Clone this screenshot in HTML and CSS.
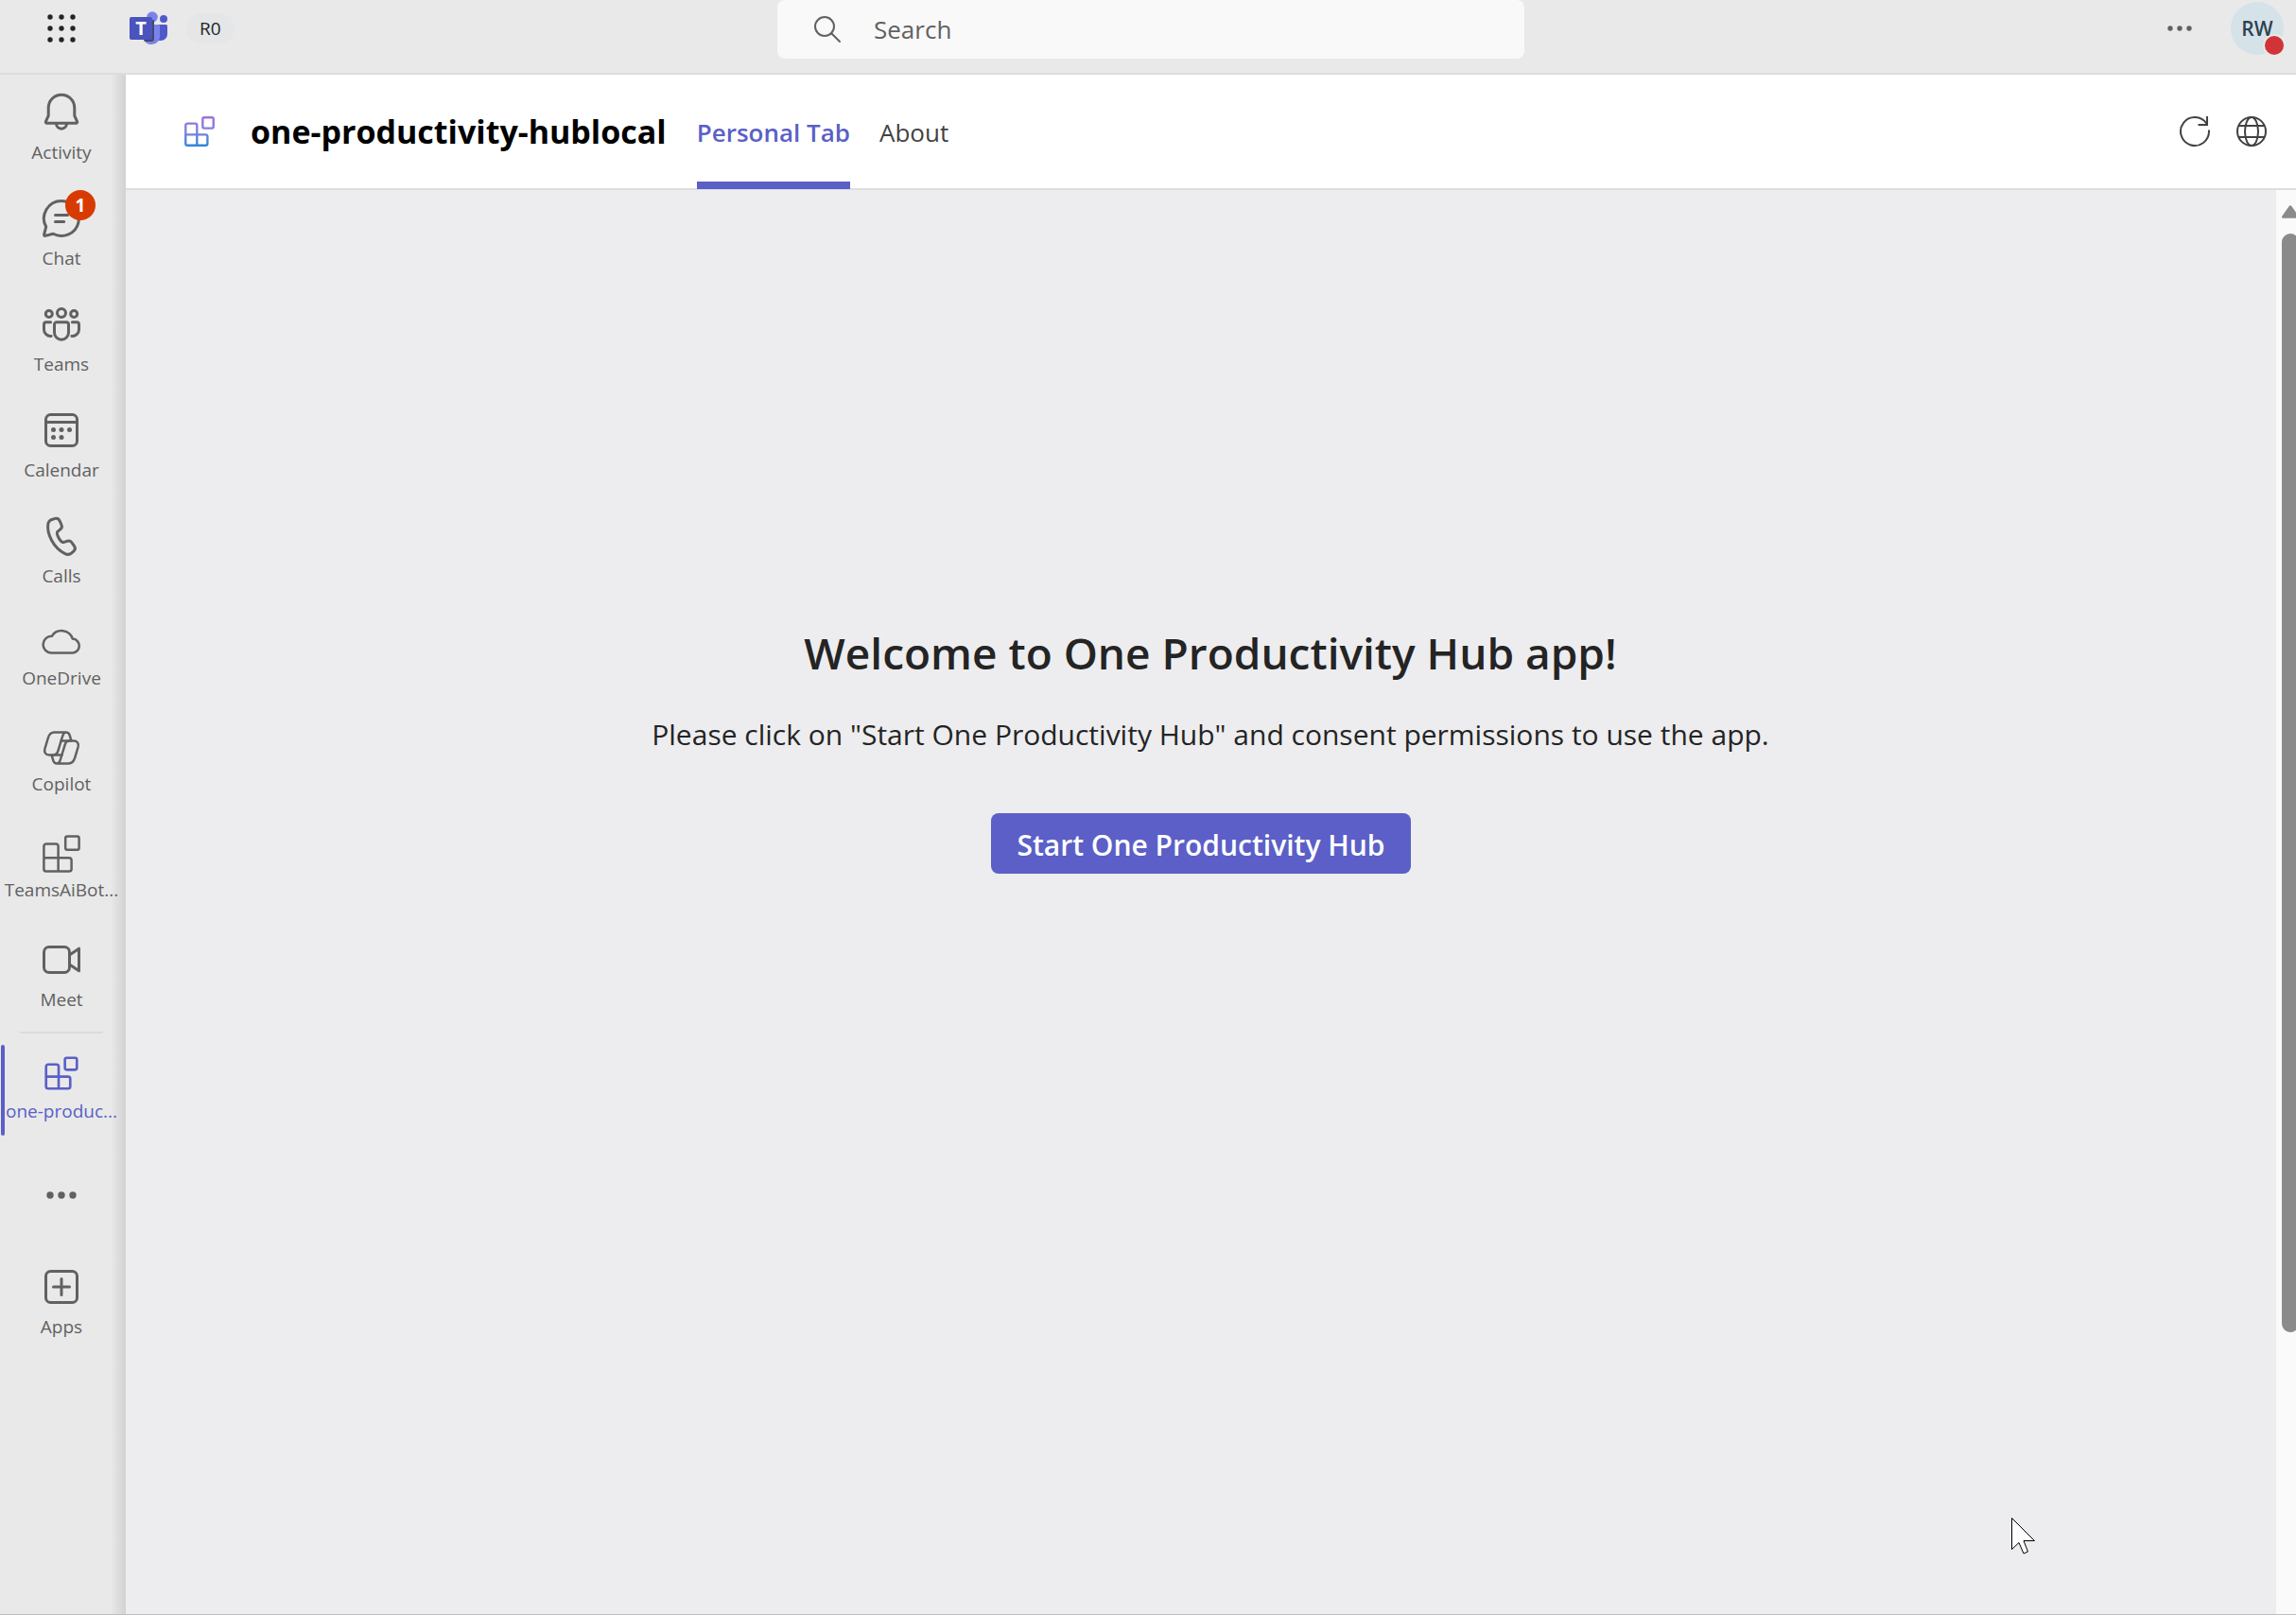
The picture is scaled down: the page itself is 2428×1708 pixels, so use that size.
FILE: index.html
```html
<!DOCTYPE html>
<html lang="en">
<head>
  <meta charset="utf-8">
  <meta name="viewport" content="width=device-width, initial-scale=1">
  <title>one-productivity-hublocal</title>
  <link rel="stylesheet" href="styles.css">
</head>
<body>
  <svg class="defs" width="0" height="0" aria-hidden="true">
    <defs>
      <linearGradient id="blocks-gradient" gradientUnits="userSpaceOnUse" x1="0" y1="2" x2="0" y2="22">
        <stop offset="0" stop-color="#a070d8"></stop>
        <stop offset="0.5" stop-color="#8080dc"></stop>
        <stop offset="1" stop-color="#2f86d6"></stop>
      </linearGradient>
      <symbol id="blocks" viewBox="0 0 24 24">
        <path d="M2.7 8a1.3 1.3 0 0 1 1.300-1.300h5a1.300 1.300 0 0 1 1.300 1.300v6.100h5.700a1.300 1.300 0 0 1 1.300 1.300V20a1.300 1.300 0 0 1-1.300 1.300H4A1.300 1.300 0 0 1 2.700 20zM2.700 14.100h7.600v7.200"></path>
        <rect x="14.1" y="2.700" width="7.200" height="7.200" rx="1"></rect>
      </symbol>
    </defs>
  </svg>

  <header class="topbar">
    <div class="topbar-start">
      <button class="icon-button waffle" aria-label="App launcher">
        <svg width="32" height="32" viewBox="0 0 32 32" fill="#242424">
          <circle cx="4" cy="4" r="2.700"></circle><circle cx="16" cy="4" r="2.700"></circle><circle cx="28" cy="4" r="2.700"></circle>
          <circle cx="4" cy="16" r="2.700"></circle><circle cx="16" cy="16" r="2.700"></circle><circle cx="28" cy="16" r="2.700"></circle>
          <circle cx="4" cy="28" r="2.700"></circle><circle cx="16" cy="28" r="2.700"></circle><circle cx="28" cy="28" r="2.700"></circle>
        </svg>
      </button>
      <svg class="logo" width="40" height="36" viewBox="0 0 40 36" role="img" aria-label="Microsoft Teams">
        <circle cx="36" cy="8" r="4" fill="#5059c9"></circle>
        <path d="M28 14h10.500a1.500 1.500 0 0 1 1.500 1.500V24a7 7 0 0 1-7 7h-5z" fill="#5059c9"></path>
        <circle cx="24" cy="6" r="5.800" fill="#7b83eb"></circle>
        <path d="M15 14h15.500a1.500 1.500 0 0 1 1.500 1.500V27a9 9 0 0 1-17 3z" fill="#7b83eb"></path>
        <path d="M20 9h5a1 1 0 0 1 1 1v19a3 3 0 0 1-3 3h-7l-2-4z" fill="#42496f"></path>
        <rect x="0" y="6" width="24" height="24" rx="2" fill="#4b53bc"></rect>
        <text class="logo-letter" x="12" y="25" text-anchor="middle">T</text>
      </svg>
      <span class="pill">R0</span>
    </div>

    <label class="search">
      <svg width="30" height="30" viewBox="0 0 30 30" fill="none" stroke="#616161" stroke-width="2" stroke-linecap="round">
        <circle cx="12" cy="12" r="10"></circle><path d="M19.500 19.500l8.500 8.500"></path>
      </svg>
      <input type="search" placeholder="Search" aria-label="Search">
    </label>

    <div class="topbar-end">
      <button class="icon-button" aria-label="Settings and more">
        <svg width="28" height="8" viewBox="0 0 28 8" fill="#616161">
          <circle cx="4" cy="4" r="2.700"></circle><circle cx="14" cy="4" r="2.700"></circle><circle cx="24" cy="4" r="2.700"></circle>
        </svg>
      </button>
      <button class="avatar" aria-label="Account RW, busy">RW<span class="presence"></span></button>
    </div>
  </header>

  <div class="shell">
    <nav class="rail" aria-label="Apps">
      <a class="rail-item" href="#activity">
        <span class="rail-icon"><svg viewBox="0 0 24 24"><path d="M12 2.600a6.900 6.900 0 0 0-6.900 6.900v4.200L3.700 16.800a.6.6 0 0 0 .55.850h15.500a.6.6 0 0 0 .55-.850l-1.400-3.100V9.500A6.900 6.900 0 0 0 12 2.600zM9.200 17.800a2.800 2.800 0 0 0 5.600 0"></path></svg></span>
        <span class="rail-label">Activity</span>
      </a>
      <a class="rail-item" href="#chat">
        <span class="rail-icon"><svg viewBox="0 0 24 24"><path d="M12 2.750a9.250 9.250 0 1 1-4.400 17.400L3.400 21.200a.5.5 0 0 1-.6-.6l1.050-4.200A9.250 9.250 0 0 1 12 2.750zM8.750 10.200h6.500M8.750 13.700h4.600"></path></svg><span class="badge">1</span></span>
        <span class="rail-label">Chat</span>
      </a>
      <a class="rail-item" href="#teams">
        <span class="rail-icon"><svg viewBox="0 0 24 24"><circle cx="12" cy="6" r="2.250"></circle><circle cx="5.400" cy="6.500" r="1.750"></circle><circle cx="18.600" cy="6.500" r="1.750"></circle><path d="M9.400 10.900h5.200a1.150 1.150 0 0 1 1.150 1.150v4.300a3.750 3.750 0 0 1-7.500 0v-4.300A1.150 1.150 0 0 1 9.400 10.900zM6.300 10.900H3.900a1.150 1.150 0 0 0-1.150 1.150v2.800a3.500 3.500 0 0 0 3.800 3.400M17.700 10.900h2.400a1.150 1.150 0 0 1 1.150 1.150v2.800a3.500 3.500 0 0 1-3.800 3.400"></path></svg></span>
        <span class="rail-label">Teams</span>
      </a>
      <a class="rail-item" href="#calendar">
        <span class="rail-icon"><svg viewBox="0 0 24 24"><rect x="3.750" y="3.750" width="16.500" height="16.500" rx="2.500"></rect><path d="M3.750 7.750h16.500"></path><g class="dots"><circle cx="7.750" cy="11.750" r="1.250"></circle><circle cx="12" cy="11.750" r="1.250"></circle><circle cx="16.250" cy="11.750" r="1.250"></circle><circle cx="7.750" cy="15.750" r="1.250"></circle><circle cx="12" cy="15.750" r="1.250"></circle></g></svg></span>
        <span class="rail-label">Calendar</span>
      </a>
      <a class="rail-item" href="#calls">
        <span class="rail-icon"><svg viewBox="0 0 24 24"><path d="M7.300 3.100l1.300-.4a2 2 0 0 1 2.400 1.100l1 2.200a2 2 0 0 1-.5 2.300L9.900 9.700c-.7.700.5 3.600 1.900 5 .6.600 1 .7 1.500.5l1.900-.6a2 2 0 0 1 2.200.7l1.400 2a2 2 0 0 1-.3 2.600l-1 .9c-1 .9-2.400 1.100-3.600.5C7.500 18 4.200 10.600 4.900 5.600c.2-1.200 1.100-2.200 2.400-2.500z"></path></svg></span>
        <span class="rail-label">Calls</span>
      </a>
      <a class="rail-item compact" href="#onedrive">
        <span class="rail-icon"><svg viewBox="0 0 24 24"><path d="M6.500 17.700h11a3.700 3.700 0 0 0 .4-7.400A6.100 6.100 0 0 0 6.900 8.900a4.400 4.400 0 0 0-.4 8.800z"></path></svg></span>
        <span class="rail-label">OneDrive</span>
      </a>
      <a class="rail-item compact" href="#copilot">
        <span class="rail-icon"><svg viewBox="0 0 24 24">
          <path d="M14 3.800c-.9.300-1.200 1.200-1.500 2.200l-2.300 7.600c-.4 1.400-1.200 2.100-2.500 2.100H5.600c-2 0-2.900-1.300-2.400-3.200l1.700-5.700C5.500 4.800 6.500 3.800 8.200 3.800h6.200c1 0 1.600.5 1.900 1.400l.9 3"></path>
          <path transform="rotate(180 12 12)" d="M14 3.800c-.9.300-1.200 1.200-1.500 2.200l-2.300 7.600c-.4 1.400-1.200 2.100-2.500 2.100H5.600c-2 0-2.900-1.300-2.400-3.200l1.700-5.700C5.500 4.800 6.500 3.800 8.200 3.800h6.200c1 0 1.600.5 1.900 1.400l.9 3"></path>
          <path d="M16.300 8.300h-4.500M7.700 15.700h4.500"></path></svg></span>
        <span class="rail-label">Copilot</span>
      </a>
      <a class="rail-item compact" href="#teamsaibot">
        <span class="rail-icon"><svg viewBox="0 0 24 24"><use href="#blocks"></use></svg></span>
        <span class="rail-label">TeamsAiBot...</span>
      </a>
      <a class="rail-item" href="#meet">
        <span class="rail-icon"><svg viewBox="0 0 24 24"><rect x="2.750" y="5.250" width="13.500" height="13.500" rx="2.750"></rect><path d="M16.250 9.500l5-3.400v11.800l-5-3.400"></path></svg></span>
        <span class="rail-label">Meet</span>
      </a>
      <hr class="rail-divider">
      <a class="rail-item active" href="#hub" aria-current="page">
        <span class="rail-icon"><svg viewBox="0 0 24 24"><use href="#blocks"></use></svg></span>
        <span class="rail-label">one-produc...</span>
      </a>
      <button class="rail-item rail-more" aria-label="View more apps">
        <svg width="32" height="8" viewBox="0 0 32 8"><circle cx="4" cy="4" r="3.700"></circle><circle cx="16" cy="4" r="3.700"></circle><circle cx="28" cy="4" r="3.700"></circle></svg>
      </button>
      <a class="rail-item" href="#apps">
        <span class="rail-icon"><svg viewBox="0 0 24 24"><rect x="3.750" y="3.750" width="16.500" height="16.500" rx="2.500"></rect><path d="M12 7.750v8.500M7.750 12h8.500"></path></svg></span>
        <span class="rail-label">Apps</span>
      </a>
    </nav>

    <main class="main">
      <header class="app-header">
        <svg class="app-icon" viewBox="0 0 24 24"><use href="#blocks"></use></svg>
        <h1 class="app-title">one-productivity-hublocal</h1>
        <nav class="tabs" aria-label="Tabs">
          <a class="tab selected" href="#personal" aria-current="page">Personal Tab</a>
          <a class="tab" href="#about">About</a>
        </nav>
        <div class="app-actions">
          <button class="icon-button" aria-label="Reload tab">
            <svg width="34" height="34" viewBox="0 0 34 34" fill="none" stroke="#424242" stroke-width="2"><path d="M32 15.500V17A15 15 0 1 1 29.500 8.700M30 1v9h-9.500"></path></svg>
          </button>
          <button class="icon-button" aria-label="Open in browser">
            <svg width="34" height="34" viewBox="0 0 34 34" fill="none" stroke="#424242" stroke-width="2"><circle cx="17" cy="17" r="15"></circle><ellipse cx="17" cy="17" rx="7" ry="15"></ellipse><path d="M3 11h28M3 23h28"></path></svg>
          </button>
        </div>
      </header>

      <div class="viewport">
        <section class="welcome">
          <h2 class="welcome-title">Welcome to One Productivity Hub app!</h2>
          <p class="welcome-text">Please click on "Start One Productivity Hub" and consent permissions to use the app.</p>
          <button class="primary">Start One Productivity Hub</button>
        </section>
        <div class="scrollbar" aria-hidden="true">
          <svg width="18" height="14" viewBox="0 0 18 14"><path d="M7.500 1.200a2 2 0 0 1 3 0l7 10a1.500 1.500 0 0 1-1.200 2.600H1.700A1.500 1.500 0 0 1 .5 11.200z" fill="#8b8b8b"></path></svg>
          <div class="thumb"></div>
        </div>
        <svg class="cursor" width="28" height="40" viewBox="0 0 28 40" aria-hidden="true"><path d="M.5.5v33l7.500-7 5 11.500 4.500-2-4.500-11.500h11.500z" fill="#fff" stroke="#000"></path></svg>
      </div>
    </main>
  </div>
</body>
</html>
```

FILE: styles.css
```css
* {
  box-sizing: border-box;
}

body {
  margin: 0;
  min-height: 100vh;
  display: flex;
  flex-direction: column;
  background: #e9e9e9;
  border-bottom: 1px solid #bdbdbd;
  color: #242424;
  font-family: "Open Sans", "Noto Sans", sans-serif;
}

button {
  margin: 0;
  padding: 0;
  border: 0;
  background: none;
  color: inherit;
  font: inherit;
}

a {
  color: inherit;
  text-decoration: none;
}

svg {
  display: block;
  flex: none;
}

.defs {
  position: absolute;
}

.icon-button {
  display: flex;
  align-items: center;
  justify-content: center;
}

/* Top bar */

.topbar {
  display: grid;
  grid-template-columns: 1fr minmax(0, 790px) 1fr;
  min-height: 79px;
  padding-left: 6px;
  border-bottom: 2px solid #dcdcdc;
}

.topbar-start,
.topbar-end {
  display: flex;
  align-items: center;
  height: 60px;
}

.waffle {
  width: 118px;
}

.logo {
  margin-left: 13px;
}

.logo-letter {
  fill: #fff;
  font-size: 20px;
  font-weight: 700;
}

.pill {
  margin-left: 20px;
  padding: 0 14px;
  border-radius: 16px;
  background: #e4e6e8;
  font-size: 19px;
  line-height: 32px;
}

.search {
  display: flex;
  align-items: center;
  gap: 34px;
  height: 62px;
  padding: 0 38px;
  border-radius: 8px;
  background: #f9f9f9;
}

.search input {
  flex: 1;
  min-width: 0;
  padding: 0;
  border: 0;
  outline: 0;
  background: none;
  color: #242424;
  font: inherit;
  font-size: 26px;
}

.search input::placeholder {
  color: #616161;
  opacity: 1;
}

.topbar-end {
  justify-content: flex-end;
  gap: 40px;
  padding-right: 13px;
}

.avatar {
  position: relative;
  width: 56px;
  height: 56px;
  border-radius: 50%;
  background: #d5e2e8;
  color: #2c4250;
  font-size: 21px;
  font-weight: 600;
}

.presence {
  position: absolute;
  right: -2px;
  bottom: -2px;
  width: 24px;
  height: 24px;
  border: 2px solid #e9e9e9;
  border-radius: 50%;
  background: #d13438;
}

/* Shell */

.shell {
  display: flex;
  flex: 1;
}

.rail {
  display: flex;
  flex-direction: column;
  flex: none;
  width: 133px;
  background: linear-gradient(to left, #d2d2d2, #e9e9e9 16px);
  color: #616161;
}

.rail-item {
  display: flex;
  flex-direction: column;
  align-items: center;
  gap: 6px;
  width: 130px;
  height: 112px;
  padding-top: 16px;
}

.rail-item.compact {
  gap: 2px;
}

.rail-icon {
  position: relative;
  display: flex;
  align-items: center;
  justify-content: center;
  width: 48px;
  height: 48px;
}

.rail-icon svg {
  width: 48px;
  height: 48px;
  fill: none;
  stroke: currentColor;
  stroke-width: 1.5;
  stroke-linecap: round;
  stroke-linejoin: round;
}

.compact .rail-icon svg {
  stroke-width: 1.25;
}

.rail-icon .dots {
  fill: currentColor;
  stroke: none;
}

.rail-label {
  font-size: 19px;
  line-height: 24px;
  white-space: nowrap;
}

.badge {
  position: absolute;
  top: -6px;
  right: -12px;
  width: 32px;
  height: 32px;
  border-radius: 50%;
  background: #d83b01;
  color: #fff;
  font-size: 19px;
  font-weight: 700;
  line-height: 32px;
  text-align: center;
}

.rail-divider {
  width: 88px;
  height: 2px;
  margin: 4px 21px 2px;
  border: 0;
  background: #dcdcdc;
}

.rail-item.active {
  position: relative;
  gap: 4px;
  color: #5b5fc7;
}

.rail-item.active::before {
  content: "";
  position: absolute;
  top: 10px;
  bottom: 6px;
  left: 1px;
  width: 4px;
  border-radius: 2px;
  background: #5b5fc7;
}

.active .rail-icon svg {
  width: 42px;
  height: 42px;
}

.rail-item.rail-more {
  justify-content: center;
  height: 114px;
  padding: 0;
  fill: #616161;
}

/* App area */

.main {
  display: flex;
  flex: 1;
  flex-direction: column;
  min-width: 0;
}

.app-header {
  display: flex;
  align-items: center;
  height: 122px;
  padding: 0 30px 0 59px;
  border-bottom: 2px solid #dedee0;
  background: #fff;
}

.app-icon {
  width: 38px;
  height: 38px;
  fill: none;
  stroke: url(#blocks-gradient);
  stroke-width: 1.5;
}

.app-title {
  margin: 0 32px 0 35px;
  color: #000;
  font-size: 34px;
  font-weight: 700;
}

.tabs {
  display: flex;
  align-self: stretch;
  gap: 31px;
}

.tab {
  display: flex;
  align-items: center;
  margin-bottom: -1px;
  padding-top: 8px;
  border-bottom: 8px solid transparent;
  color: #424242;
  font-size: 26px;
}

.tab.selected {
  border-color: #5b5fc7;
  color: #5b5fc7;
  font-weight: 600;
}

.app-actions {
  display: flex;
  gap: 26px;
  margin-left: auto;
}

.viewport {
  position: relative;
  display: flex;
  flex: 1;
  background: #ededef;
}

.welcome {
  display: flex;
  flex: 1;
  flex-direction: column;
  align-items: center;
  padding-top: 455px;
}

.welcome-title,
.welcome-text {
  margin: 0;
  padding-left: 20px;
  text-align: center;
}

.welcome-title {
  font-size: 46px;
  font-weight: 600;
  line-height: 68px;
}

.welcome-text {
  margin-top: 30px;
  font-size: 30px;
  line-height: 46px;
}

.primary {
  margin-top: 60px;
  padding: 2px 27px 0;
  height: 64px;
  border-radius: 8px;
  background: #5b5fc7;
  color: #fff;
  font-size: 30px;
  font-weight: 600;
}

.scrollbar {
  flex: none;
  width: 21px;
  padding: 16px 0 0 6px;
  overflow: hidden;
  background: #fafafa;
}

.thumb {
  width: 18px;
  height: 78%;
  margin-top: 16px;
  border-radius: 9px;
  background: #8b8b8b;
}

.cursor {
  position: absolute;
  right: 273px;
  bottom: 62px;
}
```
